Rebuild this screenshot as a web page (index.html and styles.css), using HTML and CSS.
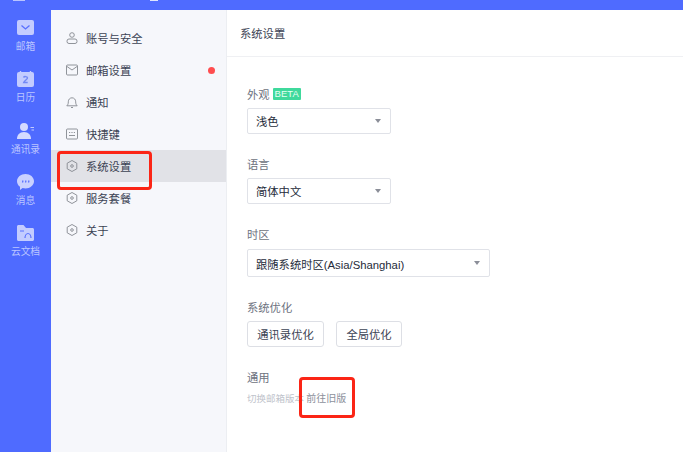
FILE: index.html
```html
<!DOCTYPE html>
<html lang="zh-CN">
<head>
<meta charset="utf-8">
<title>系统设置</title>
<link rel="stylesheet" href="styles.css">
</head>
<body>
<div class="app">
  <header class="topbar"><span class="chip chip-a"></span><span class="chip chip-b"></span></header>
  <div class="shell">
    <nav class="rail">
      <a class="rail-item">
        <svg class="rail-icon" viewBox="0 0 18 16"><rect width="17" height="15" rx="2" fill="#c3ccff"/><path d="M4.500 5.500 8.500 9l4-3.500" fill="none" stroke="#5870ff" stroke-width="1.300"/></svg>
        <span>邮箱</span>
      </a>
      <a class="rail-item">
        <svg class="rail-icon" viewBox="0 0 18 16"><path d="M3.500 0v2M13.500 0v2" stroke="#c3ccff" stroke-width="1.400"/><rect y="1" width="17" height="15" rx="2" fill="#c3ccff"/><path d="M6.500 6.500c.5-1.300 3.800-1.300 4 .4.100 1.400-3 2.600-3.800 4.600h4" fill="none" stroke="#7389f5" stroke-width="1.400"/></svg>
        <span>日历</span>
      </a>
      <a class="rail-item">
        <svg class="rail-icon" viewBox="0 0 18 16"><circle cx="7" cy="4" r="4" fill="#d4daff"/><path d="M0 16c0-4 2.500-7 7-7s7 3 7 7z" fill="#d4daff"/><path d="M13.500 4.500H17M14.500 7H17" stroke="#c3ccff"/></svg>
        <span>通讯录</span>
      </a>
      <a class="rail-item">
        <svg class="rail-icon" viewBox="0 0 18 16"><path d="M8.500 0C13.200 0 17 3.200 17 7.200s-3.800 7.200-8.500 7.200c-1 0-2-.1-2.900-.4L3 16v-3.200C1.100 11.400 0 9.400 0 7.200 0 3.200 3.800 0 8.500 0z" fill="#c9d1ff"/><path d="M5.500 8.500l.5-2M8.500 8.500l.5-2M11.500 8.500l.5-2" stroke="#5870ff" stroke-width="1.200"/></svg>
        <span>消息</span>
      </a>
      <a class="rail-item">
        <svg class="rail-icon" viewBox="0 0 18 16"><path d="M0 1.500C0 .7.700 0 1.500 0h5L9 3h6.500c.8 0 1.500.7 1.500 1.500V14.500c0 .8-.7 1.500-1.500 1.500h-14C.7 16 0 15.300 0 14.500z" fill="#c3ccff"/><path d="M3 6h4" stroke="#5870ff"/><path d="M8 13c0-2.500 1.500-4.500 3-4.500s3 2 3 4.500" fill="none" stroke="#5870ff" stroke-width="1.200"/></svg>
        <span>云文档</span>
      </a>
    </nav>

    <aside class="menu">
      <a class="menu-item">
        <svg class="menu-icon" viewBox="0 0 12 12"><circle cx="6" cy="3" r="2.300"/><rect x="1" y="7" width="10" height="4.500" rx="2"/></svg>
        <span>账号与安全</span>
      </a>
      <a class="menu-item">
        <svg class="menu-icon" viewBox="0 0 12 12"><rect x=".5" y="1" width="11" height="10" rx="1"/><path d="M1 2.500 6 6l5-3.500"/></svg>
        <span>邮箱设置</span>
        <i class="dot"></i>
      </a>
      <a class="menu-item">
        <svg class="menu-icon" viewBox="0 0 12 12"><path d="M.8 9.800h10.400c-1-1-1.500-1.700-1.500-4 0-2.200-1.500-4-3.700-4S2.300 3.600 2.300 5.800c0 2.300-.5 3-1.500 4zM5 11.500h2"/></svg>
        <span>通知</span>
      </a>
      <a class="menu-item">
        <svg class="menu-icon" viewBox="0 0 12 12"><rect x=".5" y="1" width="11" height="10" rx="1"/><path d="M3 4.500h1.200M5.400 4.500h1.200M7.800 4.500H9M3 7.500h6"/></svg>
        <span>快捷键</span>
      </a>
      <a class="menu-item is-active">
        <svg class="menu-icon" viewBox="0 0 12 12"><path d="M6 .5 10.800 3.200v5.600L6 11.500 1.200 8.800V3.200z"/><circle cx="6" cy="6" r="1.300"/></svg>
        <span>系统设置</span>
      </a>
      <a class="menu-item">
        <svg class="menu-icon" viewBox="0 0 12 12"><path d="M6 .5 10.800 3.200v5.600L6 11.500 1.200 8.800V3.200z"/><circle cx="6" cy="6" r="1.300"/></svg>
        <span>服务套餐</span>
      </a>
      <a class="menu-item">
        <svg class="menu-icon" viewBox="0 0 12 12"><path d="M6 .5 10.800 3.200v5.600L6 11.500 1.200 8.800V3.200z"/><circle cx="6" cy="6" r="1.300"/></svg>
        <span>关于</span>
      </a>
    </aside>

    <main class="content">
      <h1 class="title">系统设置</h1>
      <div class="settings">
        <section class="group">
          <div class="label">外观 <span class="beta">BETA</span></div>
          <div class="select select-sm"><span>浅色</span><i class="caret"></i></div>
        </section>
        <section class="group">
          <div class="label">语言</div>
          <div class="select select-sm"><span>简体中文</span><i class="caret"></i></div>
        </section>
        <section class="group">
          <div class="label">时区</div>
          <div class="select select-lg"><span class="latin">跟随系统时区(Asia/Shanghai)</span><i class="caret"></i></div>
        </section>
        <section class="group">
          <div class="label">系统优化</div>
          <div class="buttons">
            <button class="btn btn-contacts">通讯录优化</button>
            <button class="btn btn-global">全局优化</button>
          </div>
        </section>
        <section class="group">
          <div class="label">通用</div>
          <div class="hint">切换邮箱版本 <a class="link">前往旧版</a></div>
        </section>
      </div>
    </main>
  </div>
  <div class="mark mark-menu"></div>
  <div class="mark mark-link"></div>
</div>
</body>
</html>
```

FILE: styles.css
```css
* { box-sizing: border-box; }
html, body { margin: 0; height: 100%; overflow: hidden; }
body {
  font-family: "Noto Sans CJK SC", "Liberation Sans", sans-serif;
  font-size: 11.300px;
  color: #3c4354;
  background: #fff;
}
.app { position: relative; width: 683px; height: 452px; display: flex; flex-direction: column; overflow: hidden; }

.topbar { height: 10px; flex: none; background: #4f6bff; display: flex; align-items: flex-start; }
.chip { display: block; height: 1px; background: #b9c4ff; }
.chip-a { width: 12px; margin-left: 13px; }
.chip-b { width: 8px; margin-left: 125px; background: #dfe5ff; }

.shell { flex: 1; display: flex; min-height: 0; }

.rail { width: 51px; flex: none; background: #4f6bff; display: flex; flex-direction: column; align-items: center; padding-top: 10px; }
.rail-item { height: 51.300px; display: flex; flex-direction: column; align-items: center; color: #bcc6ff; font-size: 9.700px; line-height: 14px; white-space: nowrap; }
.rail-icon { width: 18px; height: 16px; margin-bottom: 3px; margin-left: 1px; display: block; }

.menu { width: 175px; flex: none; background: #f6f7fb; padding-top: 12px; }
.menu-item { height: 32px; display: flex; align-items: center; padding-left: 15px; line-height: 32px; color: #3c4354; }
.menu-item span { flex: 1; margin-left: 8px; }
.is-active { background: #e1e2e7; }
.menu-icon { width: 12px; height: 12px; flex: none; fill: none; stroke: #85888f; stroke-width: .9; }
.dot { width: 7px; height: 7px; border-radius: 50%; background: #ff4d4f; margin-right: 11px; }

.content { flex: 1; border-left: 1px solid #eceef2; background: #fff; min-width: 0; }
.title { margin: 0; height: 47px; padding-left: 13px; font-size: 11.300px; font-weight: 400; line-height: 46px; border-bottom: 1px solid #eff0f3; color: #3c4354; }
.settings { padding: 27px 0 0 20px; }
.group { margin-bottom: 20px; }
.label { height: 20px; padding-top: 1px; line-height: 19px; color: #6d7280; display: flex; align-items: center; gap: 3px; }
.beta { display: inline-block; height: 12px; margin-top: -1px; padding: 0 2px; line-height: 12px; font-family: "Liberation Sans", sans-serif; font-size: 9.500px; color: #e6fff4; background: #3fd99c; border-radius: 1px; }

.select { display: flex; align-items: center; justify-content: space-between; margin-top: 4px; border: 1px solid #e0e2e8; border-radius: 2px; padding: 0 9px 0 8px; color: #252b3a; background: #fff; }
.select-sm { width: 144px; height: 26px; }
.select-lg { width: 243px; height: 28px; margin-top: 5px; }
.latin { font-family: "Liberation Sans", "Noto Sans CJK SC", sans-serif; padding-top: 1px; }
.caret { width: 0; height: 0; border-left: 3.500px solid transparent; border-right: 3.500px solid transparent; border-top: 4px solid #8b8e98; }

.buttons { display: flex; gap: 12px; margin-top: 4px; }
.btn { height: 26px; padding: 0; font: inherit; color: #3c4354; background: #fff; border: 1px solid #dddfe5; border-radius: 3px; }
.btn-contacts { width: 77px; }
.btn-global { width: 66px; }

.hint { height: 20px; padding-top: 1px; line-height: 19px; font-size: 9.500px; color: #c0c3cb; white-space: nowrap; }
.link { font-size: 10px; color: #8d919c; }

.mark { position: absolute; border: 3px solid #fb2516; border-radius: 4px; }
.mark-menu { left: 57px; top: 151px; width: 95px; height: 39px; }
.mark-link { left: 299px; top: 377px; width: 56px; height: 41px; }
```
